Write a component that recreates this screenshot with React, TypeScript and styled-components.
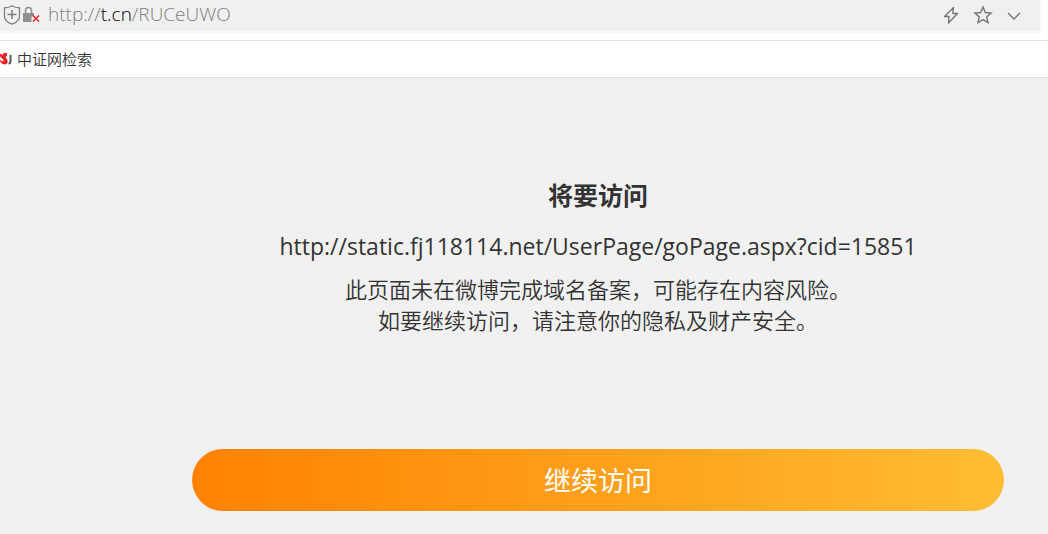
import React from "react";
import styled, { createGlobalStyle } from "styled-components";

const GlobalStyle = createGlobalStyle`
  *, *::before, *::after { box-sizing: border-box; }
  body {
    margin: 0;
    background: #f1f1f1;
    color: #333;
    font-family: "Noto Sans", "Noto Sans CJK SC", sans-serif;
  }
  h1, p { margin: 0; }
`;

const Page = styled.div`
  display: flex;
  flex-direction: column;
  min-height: 100vh;
`;

const AddressRow = styled.header`
  height: 41px;
  padding-right: 7px;
  background: #fff;
  border-bottom: 1px solid #e2e2e2;
`;

const AddressBar = styled.div`
  display: flex;
  align-items: center;
  height: 33px;
  padding: 0 16px 2px 3px;
  background: #f0f0f0;
  background-clip: padding-box;
  border: solid #f8f8f8;
  border-width: 0 1px 2px 0;
`;

const SiteStatus = styled.div`
  display: flex;
  align-items: center;
  gap: 1px;
  margin-right: 8px;
`;

const Address = styled.div`
  flex: 1;
  min-width: 0;
  padding-bottom: 2px;
  overflow: hidden;
  white-space: nowrap;
  color: #808080;
  font: 300 19px/28px "Open Sans", "Noto Sans", sans-serif;
  outline: none;
`;

const Host = styled.span`
  color: #000;
  font-weight: 350;
`;

const Actions = styled.div`
  display: flex;
  gap: 11px;
`;

const IconButton = styled.button`
  display: flex;
  padding: 0;
  border: 0;
  background: none;
  color: #757575;
  cursor: pointer;
`;

const Icon = styled.svg`
  display: block;
  flex: none;
  fill: none;
  stroke: currentColor;
`;

const BookmarkBar = styled.nav`
  display: flex;
  height: 37px;
  background: #fff;
  border-bottom: 1px solid #e2e2e2;
`;

const Bookmark = styled.a`
  display: flex;
  align-items: center;
  gap: 5px;
  color: #333;
  font-family: "Noto Sans CJK SC", sans-serif;
  font-weight: 350;
  font-size: 15px;
  line-height: 24px;
  text-decoration: none;
`;

const Notice = styled.main`
  display: flex;
  flex-direction: column;
  padding: 99px 44px 23px 192px;
  text-align: center;
`;

const Title = styled.h1`
  font-size: 25px;
  line-height: 36px;
  font-weight: 700;
`;

const Destination = styled.p`
  margin-top: 17px;
  font-family: "Open Sans", "Noto Sans", sans-serif;
  font-size: 23px;
  line-height: 32px;
  overflow-wrap: anywhere;
`;

const Warning = styled.p`
  margin-top: 11px;
  font-family: "Noto Sans CJK SC", sans-serif;
  font-size: 22px;
  line-height: 31px;
  font-weight: 350;
`;

const ContinueButton = styled.button`
  height: 62px;
  margin-top: 114px;
  padding: 0;
  border: 0;
  border-radius: 31px;
  background: linear-gradient(90deg, #ff8200, #ffbd34);
  color: #fff;
  font-family: "Noto Sans CJK SC", sans-serif;
  font-size: 27px;
  line-height: 40px;
  cursor: pointer;
`;

const ShieldIcon = () => (
  <Icon width="18" height="20" viewBox="0 0 18 20" color="#808080" strokeWidth="1.3" aria-hidden="true">
    <path d="M9 .8C6.800 2.400 4.500 2.800 1.500 2.800v8.400c0 4.200 3.400 6.400 7.500 8 4.100-1.600 7.500-3.800 7.500-8V2.800C13.500 2.800 11.200 2.400 9 .8Z" />
    <path d="M9 5v9M4.500 9.500h9" strokeWidth="1.600" />
  </Icon>
);

const InsecureIcon = () => (
  <Icon width="18" height="18" viewBox="0 0 18 18" aria-hidden="true">
    <path d="M3.500 8V4.500a3 3 0 0 1 6 0V8" stroke="#909090" strokeWidth="1.600" />
    <path d="M1 7h11v2.500L9.500 11v5H1Z" fill="#909090" stroke="none" />
    <path d="m11 9.500 6 6m0-6-6 6" stroke="#e8262b" strokeWidth="1.600" />
  </Icon>
);

const FlashIcon = () => (
  <Icon width="20" height="20" viewBox="0 0 20 20" strokeWidth="1.400" strokeLinejoin="round" aria-hidden="true">
    <path d="M11.500 2.500 2.500 11.500H7L6.500 18l9-9.500h-4.700Z" />
  </Icon>
);

const StarIcon = () => (
  <Icon width="20" height="20" viewBox="0 0 20 20" strokeWidth="1.400" aria-hidden="true">
    <path d="m10 2 2.300 5.500 5.800.5-4.400 3.900 1.300 5.600-5-2.900-5 2.900 1.300-5.600L1.900 8l5.800-.5Z" />
  </Icon>
);

const ChevronIcon = () => (
  <Icon width="20" height="20" viewBox="0 0 20 20" strokeWidth="1.400" aria-hidden="true">
    <path d="m4 8 6 6 6-6" />
  </Icon>
);

const BookmarkLogo = () => (
  <Icon width="12" height="14" viewBox="0 0 12 14" aria-hidden="true">
    <path d="M0 1.500 2.500 3 3.500 1H7v3L5.500 5 7.500 8v3l-2 1.500-3-.5L0 9.500V8l3 1.500.5-1.500L0 4.500Z" fill="#ed2229" stroke="none" />
    <path d="M10.500 3v6.500c0 1.500-.7 2-2 2" stroke="#555" strokeWidth="2" />
  </Icon>
);

export default function App() {
  return (
    <Page>
      <GlobalStyle />
      <AddressRow>
        <AddressBar>
          <SiteStatus>
            <ShieldIcon />
            <InsecureIcon />
          </SiteStatus>
          <Address role="textbox" aria-label="地址栏" contentEditable suppressContentEditableWarning spellCheck={false}>
            http://<Host>t.cn</Host>/RUCeUWO
          </Address>
          <Actions>
            <IconButton type="button" aria-label="极速模式"><FlashIcon /></IconButton>
            <IconButton type="button" aria-label="收藏"><StarIcon /></IconButton>
            <IconButton type="button" aria-label="展开"><ChevronIcon /></IconButton>
          </Actions>
        </AddressBar>
      </AddressRow>
      <BookmarkBar aria-label="书签">
        <Bookmark href="#search"><BookmarkLogo />中证网检索</Bookmark>
      </BookmarkBar>
      <Notice>
        <Title>将要访问</Title>
        <Destination>http://static.fj118114.net/UserPage/goPage.aspx?cid=15851</Destination>
        <Warning>
          此页面未在微博完成域名备案，可能存在内容风险。
          <br />
          如要继续访问，请注意你的隐私及财产安全。
        </Warning>
        <ContinueButton type="button">继续访问</ContinueButton>
      </Notice>
    </Page>
  );
}
